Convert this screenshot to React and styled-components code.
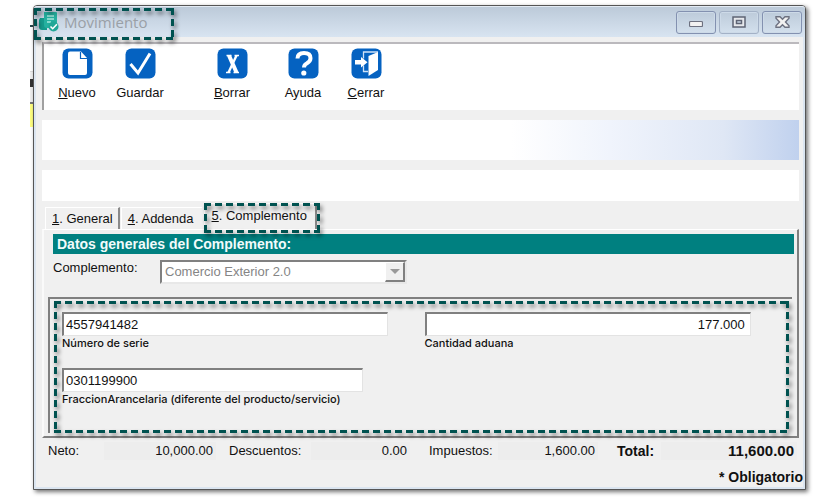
import React from "react";
import styled, { createGlobalStyle, css } from "styled-components";

const GlobalStyle = createGlobalStyle`
  * {
    box-sizing: border-box;
  }
  body {
    margin: 0;
    background: #fff;
    color: #111;
    font-family: "Liberation Sans", Arial, sans-serif;
    font-size: 13px;
    line-height: 16px;
  }
  button,
  input,
  select {
    font: inherit;
    color: inherit;
  }
`;

const Desktop = styled.div`
  display: flex;
  padding: 5px 9px 9px 30px;
`;

// strip of the window that sits behind this one
const BackWindow = styled.div`
  width: 3px;
  flex: none;
  background: linear-gradient(
    #fff 0 20px,
    #2a4a50 20px 22px,
    #fff 22px 66px,
    #ddd 66px 67px,
    #f0f0f0 67px 74px,
    #333 74px 82px,
    #eee 82px 97px,
    #777 97px 99px,
    #ffff80 99px 122px,
    #fff 122px
  );
`;

const Window = styled.main`
  flex: 1;
  min-width: 0;
  background: #f0f0f0;
  border: 1px solid #555;
  border-radius: 4px 4px 0 0;
  box-shadow: inset 2px 0 #dbe5f0, inset -2px -2px #dbe5f0,
    2px 2px 4px rgba(0, 0, 0, 0.55);
`;

const TitleBar = styled.header`
  position: relative;
  display: flex;
  align-items: center;
  height: 31px;
  padding: 0 3px 0 5px;
  border-top: 1px solid #e3ebf4;
  border-radius: 3px 3px 0 0;
  background: linear-gradient(#bccad9, #d8e4f1);
`;

const Title = styled.h1`
  flex: 1;
  margin: 0 0 0 5px;
  font: 400 15px/20px "Open Sans", "Noto Sans", sans-serif;
  color: #9aa0a6;
`;

const WindowButtons = styled.div`
  display: flex;
  gap: 3px;
`;

const WindowButton = styled.button`
  display: flex;
  align-items: center;
  justify-content: center;
  width: 40px;
  height: 23px;
  padding: 0;
  border: 1px solid ${props => (props.$soft ? "#a3b1c6" : "#8391b0")};
  border-radius: 3px;
  background: linear-gradient(#bdcbda, #d3e0ed);
  box-shadow: inset 0 0 0 1px #cddae8;
`;

// dashed frame with a soft shadow, drawn over whatever it surrounds
const Highlight = styled.div`
  --dash-x: repeating-linear-gradient(90deg, #005250 0 7px, transparent 7px 11px);
  --dash-y: repeating-linear-gradient(#005250 0 7px, transparent 7px 11px);
  position: absolute;
  inset: ${props => props.$inset};
  width: ${props => props.$width || "auto"};
  z-index: 1;
  pointer-events: none;
  background: var(--dash-x) top / 100% 3px, var(--dash-x) bottom / 100% 3px,
    var(--dash-y) left / 3px 100%, var(--dash-y) right / 3px 100%;
  background-repeat: no-repeat;
  filter: drop-shadow(2px 3px 2px rgba(0, 0, 0, 0.5));
`;

const Client = styled.div`
  padding: 5px 6px 0 8px;
`;

const Toolbar = styled.nav`
  display: flex;
  height: 68px;
  padding: 4px 2px 0;
  background: #fff;
  border-top: 2px solid #bbb9bd;
  border-left: 2px solid #a0a0a0;
`;

const Tool = styled.button`
  display: flex;
  flex-direction: column;
  align-items: center;
  gap: 6px;
  width: 62px;
  margin-left: ${props => props.$gap || 0}px;
  padding: 0;
  border: 0;
  background: none;
`;

const Banner = styled.div`
  height: 40px;
  margin-top: 10px;
  background: linear-gradient(
    90deg,
    #fff 62%,
    #f0f4fc 75%,
    #dfe7f5 90%,
    #c0d1ee
  );
`;

const BlankRow = styled.div`
  height: 31px;
  margin-top: 10px;
  background: #fff;
`;

const TabList = styled.div`
  display: flex;
  align-items: flex-end;
  height: 28px;
  padding-left: 3px;
`;

const Tab = styled.button`
  position: relative;
  height: 22px;
  margin-right: 1px;
  padding: 1px 8px 0 6px;
  border: 0;
  border-top: 1px solid #fff;
  border-left: 1px solid #fff;
  background: #f0f0f0;
  ${props =>
    props.$divided &&
    css`
      padding-right: 5px;
      border-right: 2px solid #8a8a8a;
    `}
  ${props =>
    props.$active &&
    css`
      height: 26px;
      margin-left: 1px;
      padding: 0 8px 2px 7px;
      border-right: 2px solid #8a8a8a;
    `}
`;

const Panel = styled.section`
  padding: 4px 3px 3px 4px;
  border: 2px solid #808080;
  border-top: 1px solid #fff;
  border-left: 2px solid #fafafa;
`;

const SectionTitle = styled.h2`
  margin: 0 0 0 5px;
  padding: 0 4px;
  background: #008080;
  color: #f2fbfb;
  font-size: 14px;
  line-height: 20px;
`;

const ComplementRow = styled.div`
  display: flex;
  align-items: flex-start;
  height: 43px;
  padding: 6px 5px;
`;

const ComplementLabel = styled.label`
  width: 107px;
`;

const SelectBox = styled.div`
  display: flex;
  width: 247px;
  height: 24px;
  border: 2px solid #808080;
  border-right-color: #e8e8e8;
  border-bottom-color: #e8e8e8;
  background: #fff;
`;

const Select = styled.select`
  flex: 1;
  appearance: none;
  padding: 0 3px;
  border: 0;
  background: #fff;
  color: #858585;
  opacity: 1;
`;

const Arrow = styled.span`
  display: flex;
  align-items: center;
  justify-content: center;
  width: 20px;
  background: #f0f0f0;
  border: 1px solid #fff;
  border-right: 2px solid #808080;
  border-bottom: 2px solid #808080;
`;

const Fields = styled.div`
  position: relative;
  display: grid;
  grid-template-columns: 1fr 1fr;
  row-gap: 18px;
  align-content: start;
  height: 136px;
  margin-right: 2px;
  padding: 13px 5px 0 12px;
  border-top: 2px solid #808080;
  border-left: 2px solid #808080;
`;

const Field = styled.div`
  display: flex;
  flex-direction: column;
`;

const FieldInput = styled.input`
  width: ${props => props.$width};
  height: 24px;
  padding: 0 5px 1px 2px;
  border: 2px solid #808080;
  border-right: 1px solid #e3e3e3;
  border-bottom: 1px solid #e3e3e3;
  background: #fff;
  text-align: ${props => props.$align || "left"};
`;

const FieldLabel = styled.label`
  font: 500 11px/14px Inter, "Liberation Sans", sans-serif;
`;

const Totals = styled.dl`
  display: flex;
  margin: 4px 0 0;
  padding: 0 2px 0 6px;
`;

const Total = styled.div`
  display: flex;
  flex: ${props => props.$grow} 1 0;
  align-items: center;
  height: 18px;
  margin-right: ${props => props.$gap || 0}px;
  font-weight: ${props => (props.$strong ? 700 : 400)};
  dt {
    width: ${props => props.$label}px;
    font-size: ${props => (props.$strong ? 14 : 13)}px;
  }
  dd {
    flex: 1;
    margin: 0;
    padding-right: 3px;
    background: #ededed;
    font-size: ${props => (props.$strong ? 15 : 13)}px;
    line-height: 18px;
    text-align: right;
  }
`;

const Required = styled.p`
  margin: 9px -4px 0 0;
  padding-bottom: 4px;
  font-size: 14px;
  font-weight: 700;
  line-height: 16px;
  text-align: right;
`;

const AppIcon = () => (
  <svg width="20" height="20" viewBox="0 0 20 20">
    <path d="M1 6h7v12H3q-3 0-3-3V8z" fill="#169a8c" />
    <path d="M5 0h12q1 0 1 1v15H8q-3 0-3-3z" fill="#25b09f" />
    <path d="M8 4h7M8 7h7M8 10h4" stroke="#a6e6dd" strokeWidth="1.4" />
    <circle cx="14.5" cy="14.5" r="5" fill="#22a797" />
    <path d="M11.5 14.5l2.2 2.2 4.2-4.5" fill="none" stroke="#fff" strokeWidth="1.6" />
  </svg>
);

const ToolIcon = ({ children }) => (
  <svg width="31" height="31" viewBox="0 0 31 31">
    <rect x="0.5" y="0.5" width="30" height="30" rx="6" fill="#0562c1" />
    {children}
  </svg>
);

const icons = {
  nuevo: (
    <g>
      <path
        d="M8 3.5h11l6 6.500V25q0 2-2 2H8q-2 0-2-2V5.500q0-2 2-2z"
        fill="#fff"
      />
      <path d="M18.500 4v6.500H25" fill="none" stroke="#0562c1" strokeWidth="1.2" />
    </g>
  ),
  guardar: (
    <path d="M5.5 16l7.500 9L25 5.5" fill="none" stroke="#fff" strokeWidth="3" />
  ),
  borrar: (
    <g fill="none" stroke="#fff">
      <path d="M12 7.5l7.500 17" strokeWidth="4" />
      <path d="M19.5 7.5l-8 17" strokeWidth="2.4" />
      <path d="M9.5 7.5h5M17.5 7.5H22M9 24.5h4.500M16.5 24.5H22" strokeWidth="1.4" />
    </g>
  ),
  ayuda: (
    <g fill="none" stroke="#fff">
      <path
        d="M9.5 10.5q0-5.500 6.500-5.500 6.500 0 6.500 5.200 0 3-3.500 5-3 1.500-3 4.300"
        strokeWidth="4"
      />
      <circle cx="15.8" cy="25" r="2.6" fill="#fff" stroke="none" />
    </g>
  ),
  cerrar: (
    <g>
      <path
        d="M12.5 10.5V4H27M12.5 17.5v6H17"
        fill="none"
        stroke="#cfe2f7"
        strokeWidth="1.3"
      />
      <path d="M17.5 8l9.500-4v18l-9.500 6z" fill="#fff" />
      <path d="M4 12h6V9l6.500 5.300L10 19.5v-3H4z" fill="#fff" />
    </g>
  )
};

const tools = [
  { icon: "nuevo", label: <><u>N</u>uevo</> },
  { icon: "guardar", label: "Guardar", gap: 1 },
  { icon: "borrar", label: <><u>B</u>orrar</>, gap: 30 },
  { icon: "ayuda", label: "Ayuda", gap: 9 },
  { icon: "cerrar", label: <><u>C</u>errar</>, gap: 1 }
];

const App = () => {
  return (
    <>
      <GlobalStyle />
      <Desktop>
        <BackWindow />
        <Window>
          <TitleBar>
            <AppIcon />
            <Title>Movimiento</Title>
            <WindowButtons>
              <WindowButton aria-label="Minimizar">
                <svg width="14" height="14" viewBox="0 0 14 14">
                  <rect
                    x="0.5"
                    y="6.5"
                    width="13"
                    height="5"
                    rx="1"
                    fill="#f2f2f2"
                    stroke="#6d7180"
                    strokeWidth="1.2"
                  />
                </svg>
              </WindowButton>
              <WindowButton $soft aria-label="Maximizar">
                <svg width="14" height="12" viewBox="0 0 14 12">
                  <path
                    d="M1 1h12v10H1zM4.500 4.500v3h5v-3z"
                    fill="#e6e8ec"
                    fillRule="evenodd"
                    stroke="#5f6474"
                    strokeWidth="1.5"
                  />
                </svg>
              </WindowButton>
              <WindowButton aria-label="Cerrar ventana">
                <svg width="15" height="12" viewBox="0 0 15 12">
                  <path
                    d="M1 0.7h4l2.500 2.600L10 0.7h4v1.600L10.5 6l3.500 3.700v1.600h-4L7.5 8.7 5 11.3H1V9.7L4.5 6 1 2.300z"
                    fill="#f2f2f2"
                    stroke="#6d7180"
                    strokeWidth="1.4"
                  />
                </svg>
              </WindowButton>
            </WindowButtons>
            <Highlight $inset="1px auto -3px 0" $width="140px" />
          </TitleBar>

          <Client>
            <Toolbar>
              {tools.map(tool => (
                <Tool key={tool.icon} $gap={tool.gap}>
                  <ToolIcon>{icons[tool.icon]}</ToolIcon>
                  <span>{tool.label}</span>
                </Tool>
              ))}
            </Toolbar>
            <Banner />
            <BlankRow />

            <TabList role="tablist">
              <Tab role="tab" $divided>
                <u>1</u>. General
              </Tab>
              <Tab role="tab">
                <u>4</u>. Addenda
              </Tab>
              <Tab role="tab" aria-selected="true" $active>
                <u>5</u>. Complemento
                <Highlight $inset="-1px -5px -4px -1px" />
              </Tab>
            </TabList>

            <Panel>
              <SectionTitle>Datos generales del Complemento:</SectionTitle>
              <ComplementRow>
                <ComplementLabel htmlFor="complemento">
                  Complemento:
                </ComplementLabel>
                <SelectBox>
                  <Select id="complemento" disabled>
                    <option>Comercio Exterior 2.0</option>
                  </Select>
                  <Arrow>
                    <svg width="10" height="5" viewBox="0 0 10 5">
                      <path d="M0 0h10L5 5z" fill="#999" />
                    </svg>
                  </Arrow>
                </SelectBox>
              </ComplementRow>
              <Fields>
                <Field>
                  <FieldInput id="serie" $width="90%" defaultValue="4557941482" />
                  <FieldLabel htmlFor="serie">Número de serie</FieldLabel>
                </Field>
                <Field>
                  <FieldInput
                    id="cantidad"
                    $width="90%"
                    $align="right"
                    defaultValue="177.000"
                  />
                  <FieldLabel htmlFor="cantidad">Cantidad aduana</FieldLabel>
                </Field>
                <Field>
                  <FieldInput id="fraccion" $width="83%" defaultValue="0301199900" />
                  <FieldLabel htmlFor="fraccion">
                    FraccionArancelaria (diferente del producto/servicio)
                  </FieldLabel>
                </Field>
                <Highlight $inset="2px 3px 0 4px" />
              </Fields>
            </Panel>

            <Totals>
              <Total $grow={168} $label={56} $gap={13}>
                <dt>Neto:</dt>
                <dd>10,000.00</dd>
              </Total>
              <Total $grow={181} $label={82} $gap={19}>
                <dt>Descuentos:</dt>
                <dd>0.00</dd>
              </Total>
              <Total $grow={169} $label={69} $gap={19}>
                <dt>Impuestos:</dt>
                <dd>1,600.00</dd>
              </Total>
              <Total $grow={180} $label={44} $strong>
                <dt>Total:</dt>
                <dd>11,600.00</dd>
              </Total>
            </Totals>
            <Required>* Obligatorio</Required>
          </Client>
        </Window>
      </Desktop>
    </>
  );
};

export default App;
